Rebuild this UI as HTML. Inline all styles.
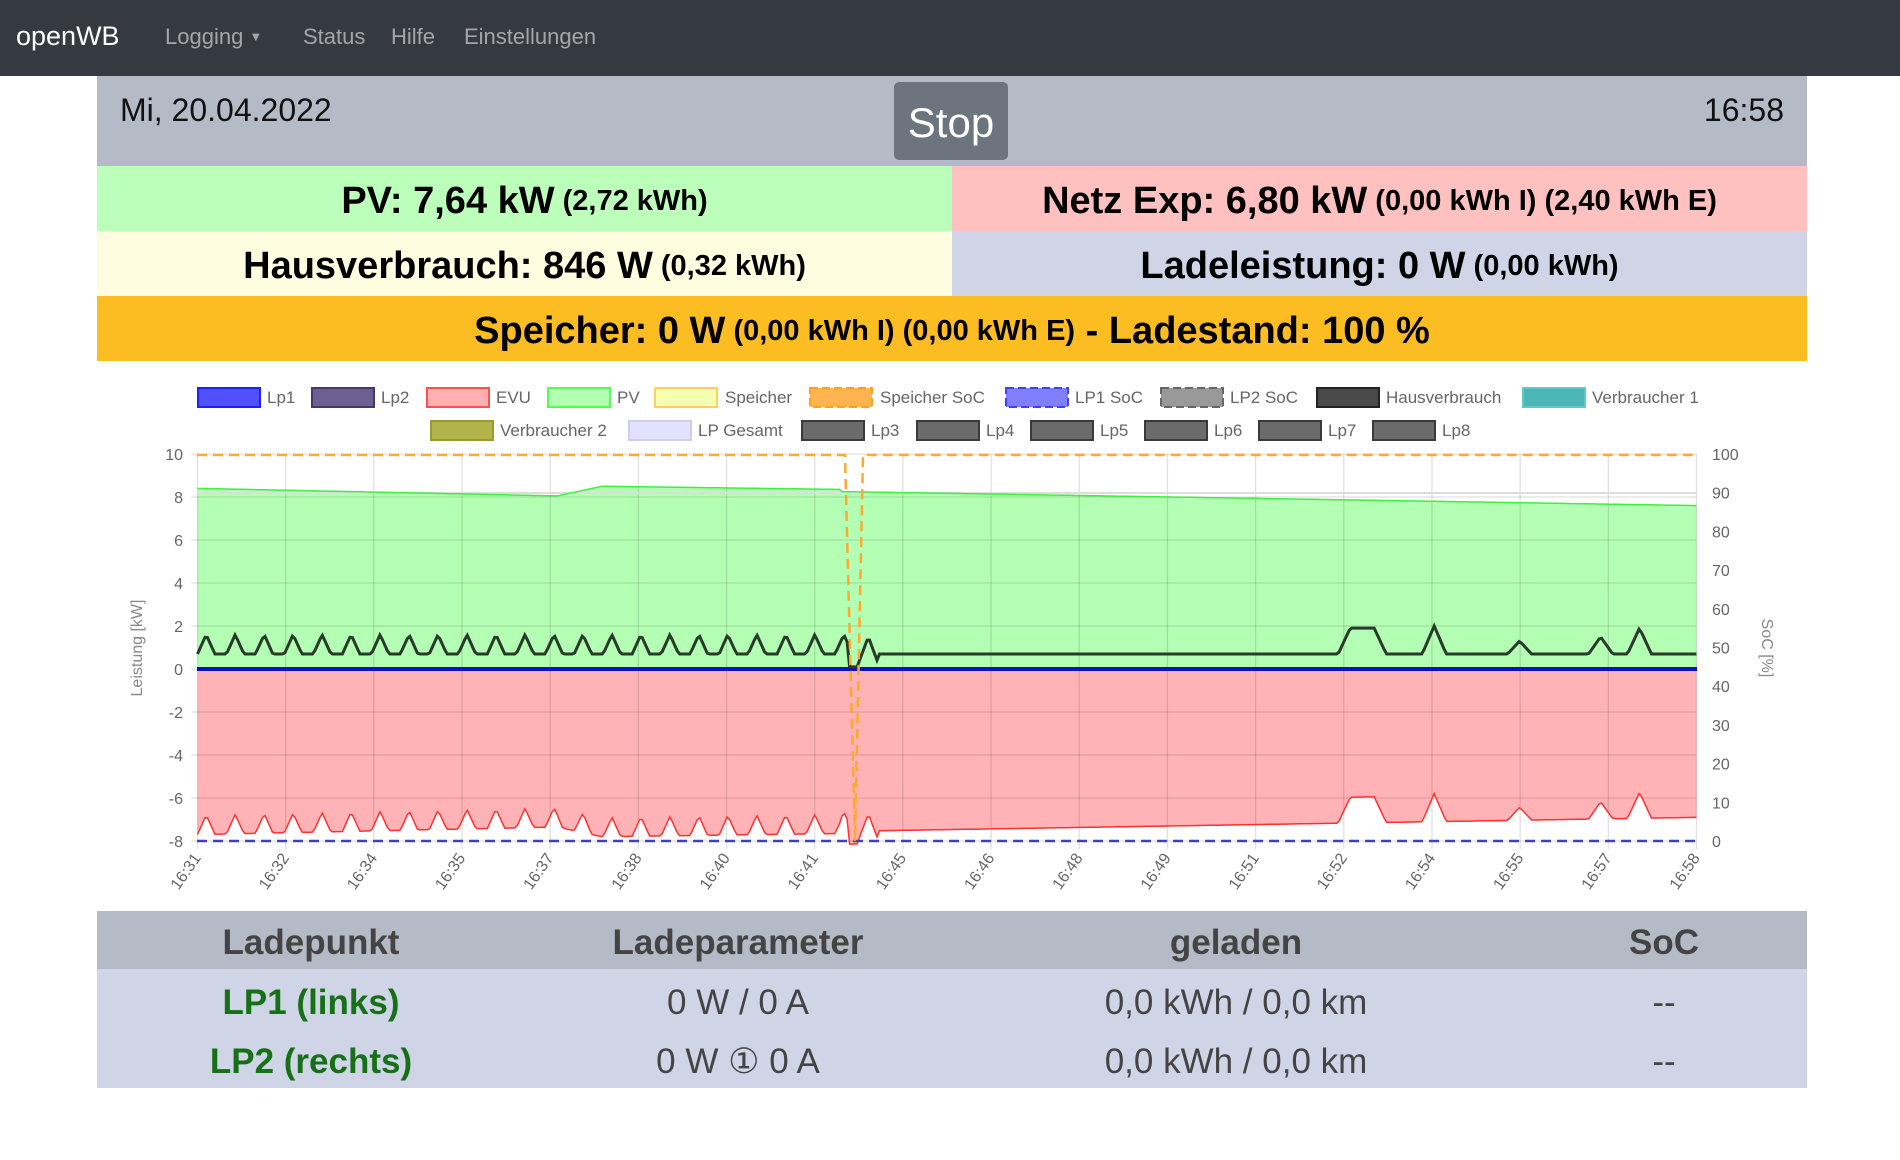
<!DOCTYPE html>
<html><head><meta charset="utf-8"><style>
*{margin:0;padding:0;box-sizing:border-box}
body{width:1900px;height:1160px;background:#fff;font-family:"Liberation Sans",sans-serif;position:relative;overflow:hidden}
.a{position:absolute}
.nav{left:0;top:0;width:1900px;height:76px;background:#343a40}
.nl{top:24px;font-size:22px;color:rgba(255,255,255,.55)}
.box{display:flex;align-items:center;justify-content:center;font-weight:bold;font-size:38px;color:#000;white-space:nowrap;padding-top:6px}
.box small{font-size:29px;margin-left:8px}
.th{top:914px;height:58px;font-size:35px;font-weight:bold;color:#444;text-align:center;width:500px;margin-left:-250px;line-height:58px}
.td{font-size:35px;color:#444;text-align:center;width:500px;margin-left:-250px}
.g{color:#177017;font-weight:bold}
</style></head><body>
<div class="a nav"></div>
<div class="a" style="left:16px;top:21px;font-size:27px;color:#fff">openWB</div>
<div class="a nl" style="left:165px">Logging <span style="font-size:13px;vertical-align:3px">&#9660;</span></div>
<div class="a nl" style="left:303px">Status</div>
<div class="a nl" style="left:391px">Hilfe</div>
<div class="a nl" style="left:464px">Einstellungen</div>

<div class="a" style="left:97px;top:76px;width:1710px;height:90px;background:#b5bac7"></div>
<div class="a" style="left:120px;top:92px;font-size:32px;color:#111">Mi, 20.04.2022</div>
<div class="a" style="right:116px;top:92px;font-size:32px;color:#111">16:58</div>
<div class="a" style="left:894px;top:82px;width:114px;height:78px;background:#6c757d;border-radius:5px;color:#fff;font-size:42px;text-align:center;line-height:82px">Stop</div>

<div class="a box" style="left:97px;top:166px;width:855px;height:65px;background:#bbffbb">PV: 7,64 kW<small>(2,72 kWh)</small></div>
<div class="a box" style="left:952px;top:166px;width:855px;height:65px;background:#ffc0c0">Netz Exp: 6,80 kW<small>(0,00 kWh I) (2,40 kWh E)</small></div>
<div class="a box" style="left:97px;top:231px;width:855px;height:65px;background:#fffde0">Hausverbrauch: 846 W<small>(0,32 kWh)</small></div>
<div class="a box" style="left:952px;top:231px;width:855px;height:65px;background:#cfd5e6">Ladeleistung: 0 W<small>(0,00 kWh)</small></div>
<div class="a box" style="left:97px;top:296px;width:1710px;height:65px;background:#fcbd23">Speicher: 0 W<small>(0,00 kWh I) (0,00 kWh E)</small>&nbsp;- Ladestand: 100 %</div>

<svg class="a" style="left:0;top:361px" width="1900" height="550" viewBox="0 361 1900 550" font-family="Liberation Sans, sans-serif">
<g font-size="17" fill="#666">
<rect x="198" y="388" width="62" height="19" fill="#5050ff" stroke="#2020ff" stroke-width="2"/><text x="267" y="403">Lp1</text>
<rect x="312" y="388" width="62" height="19" fill="#6e5f93" stroke="#433a6a" stroke-width="2"/><text x="381" y="403">Lp2</text>
<rect x="427" y="388" width="62" height="19" fill="#ffb0b0" stroke="#ff5050" stroke-width="2"/><text x="496" y="403">EVU</text>
<rect x="548" y="388" width="62" height="19" fill="#b3ffb3" stroke="#50ff50" stroke-width="2"/><text x="617" y="403">PV</text>
<rect x="655" y="388" width="62" height="19" fill="#f5ffb0" stroke="#ffd060" stroke-width="2"/><text x="725" y="403">Speicher</text>
<rect x="810" y="388" width="62" height="19" fill="#ffb450" stroke="#ffa020" stroke-width="2" stroke-dasharray="8 4"/><text x="880" y="403">Speicher SoC</text>
<rect x="1006" y="388" width="62" height="19" fill="#8080ff" stroke="#4040ff" stroke-width="2" stroke-dasharray="8 4"/><text x="1075" y="403">LP1 SoC</text>
<rect x="1161" y="388" width="62" height="19" fill="#999" stroke="#666" stroke-width="2" stroke-dasharray="8 4"/><text x="1230" y="403">LP2 SoC</text>
<rect x="1317" y="388" width="62" height="19" fill="#4a4a4a" stroke="#222" stroke-width="2"/><text x="1386" y="403">Hausverbrauch</text>
<rect x="1523" y="388" width="62" height="19" fill="#4cb5b5" stroke="#60c8c8" stroke-width="2"/><text x="1592" y="403">Verbraucher 1</text>
<rect x="431" y="421" width="62" height="19" fill="#b3b34c" stroke="#999930" stroke-width="2"/><text x="500" y="436">Verbraucher 2</text>
<rect x="629" y="421" width="62" height="19" fill="#e2e2ff" stroke="#d0d0ee" stroke-width="2"/><text x="698" y="436">LP Gesamt</text>
<rect x="802" y="421" width="62" height="19" fill="#6b6b6e" stroke="#3a3a3a" stroke-width="2"/><text x="871" y="436">Lp3</text>
<rect x="917" y="421" width="62" height="19" fill="#6b6b6e" stroke="#3a3a3a" stroke-width="2"/><text x="986" y="436">Lp4</text>
<rect x="1031" y="421" width="62" height="19" fill="#6b6b6e" stroke="#3a3a3a" stroke-width="2"/><text x="1100" y="436">Lp5</text>
<rect x="1145" y="421" width="62" height="19" fill="#6b6b6e" stroke="#3a3a3a" stroke-width="2"/><text x="1214" y="436">Lp6</text>
<rect x="1259" y="421" width="62" height="19" fill="#6b6b6e" stroke="#3a3a3a" stroke-width="2"/><text x="1328" y="436">Lp7</text>
<rect x="1373" y="421" width="62" height="19" fill="#6b6b6e" stroke="#3a3a3a" stroke-width="2"/><text x="1442" y="436">Lp8</text>
</g>
<path id="pvf" fill="#b3ffb3"/>
<path id="evf" fill="#ffb3b6"/>
<g id="grid" stroke="rgba(0,0,0,0.12)" stroke-width="1.3"></g>
<line x1="197" y1="493" x2="1697" y2="493" stroke="#ddd" stroke-width="2"/>
<path id="pvl" fill="none" stroke="#40ee40" stroke-width="1.5"/>
<path id="evl" fill="none" stroke="#ff3030" stroke-width="1.5"/>
<line x1="197" y1="669" x2="1697" y2="669" stroke="#1010c0" stroke-width="4"/>
<line x1="197" y1="841" x2="1697" y2="841" stroke="#4040c0" stroke-width="2.5" stroke-dasharray="10 6"/>
<path id="hl" fill="none" stroke="#2a3a2a" stroke-width="3"/>
<path d="M197 455 H845 L855 841 L863 455 H1697" fill="none" stroke="#ffa830" stroke-width="2.5" stroke-dasharray="10 6"/>
<g font-size="16" fill="#666" id="yl"></g>
<text transform="translate(142 648) rotate(-90)" font-size="16" fill="#888" text-anchor="middle">Leistung [kW]</text>
<text transform="translate(1762 648) rotate(90)" font-size="16" fill="#888" text-anchor="middle">SoC [%]</text>
<g font-size="16" fill="#666" id="xl"></g>
</svg>

<div class="a" style="left:97px;top:911px;width:1710px;height:58px;background:#b5bac7"></div>
<div class="a" style="left:97px;top:969px;width:1710px;height:119px;background:#cfd5e6"></div>
<div class="a th" style="left:311px">Ladepunkt</div>
<div class="a th" style="left:738px">Ladeparameter</div>
<div class="a th" style="left:1236px">geladen</div>
<div class="a th" style="left:1664px">SoC</div>
<div class="a td g" style="left:311px;top:983px">LP1 (links)</div>
<div class="a td" style="left:738px;top:983px">0 W / 0 A</div>
<div class="a td" style="left:1236px;top:983px">0,0 kWh / 0,0 km</div>
<div class="a td" style="left:1664px;top:983px">--</div>
<div class="a td g" style="left:311px;top:1042px">LP2 (rechts)</div>
<div class="a td" style="left:738px;top:1042px">0 W &#9312; 0 A</div>
<div class="a td" style="left:1236px;top:1042px">0,0 kWh / 0,0 km</div>
<div class="a td" style="left:1664px;top:1042px">--</div>
<script>
var X0=197.5,X1=1696.5,Y10=454,U=21.5;
function Y(v){return Y10+(10-v)*U}
var N=600,pv=[],h=[];
var spikes=[[0.769,0.785,1.9],[0.825,0.825,2.0],[0.882,0.882,1.3],[0.936,0.936,1.5],[0.962,0.962,1.9]];
for(var i=0;i<=N;i++){var f=i/N,p;
 if(f<0.24)p=8.4-0.35*f/0.24;else if(f<0.27)p=8.05+0.45*(f-0.24)/0.03;else if(f<0.43)p=8.5-0.15*(f-0.27)/0.16;else p=8.25-0.65*(f-0.43)/0.57;
 pv.push(p);
 var v;
 if(f<0.435){var per=0.435/22.5,ph=(f%per)/per;v=0.7+0.9*Math.max(0,1-Math.abs(ph-0.3)/0.3);}
 else if(f<0.44)v=0.1;
 else if(f<0.455){v=0.1+1.4*(1-Math.abs(f-0.4475)/0.0075);}
 else {v=0.7;for(var s of spikes){var w=0.008;if(f>=s[0]-w&&f<=s[1]+w){var d=f<s[0]?(f-(s[0]-w))/w:f>s[1]?((s[1]+w)-f)/w:1;v=Math.max(v,0.7+(s[2]-0.7)*d);}}}
 h.push(v);}
function xs(i){return (X0+(X1-X0)*i/N).toFixed(1)}
var a="",b="",c="";
for(i=0;i<=N;i++){a+=(i?"L":"M")+xs(i)+" "+Y(pv[i]).toFixed(1);b+=(i?"L":"M")+xs(i)+" "+Y(h[i]-pv[i]).toFixed(1);c+=(i?"L":"M")+xs(i)+" "+Y(h[i]).toFixed(1);}
var z=Y(0);
document.getElementById("pvl").setAttribute("d",a);
document.getElementById("pvf").setAttribute("d",a+"L"+X1+" "+z+"L"+X0+" "+z+"Z");
document.getElementById("evl").setAttribute("d",b);
document.getElementById("evf").setAttribute("d",b+"L"+X1+" "+z+"L"+X0+" "+z+"Z");
document.getElementById("hl").setAttribute("d",c);
var ns="http://www.w3.org/2000/svg",g=document.getElementById("grid"),yl=document.getElementById("yl"),xl=document.getElementById("xl");
function el(t,at,p,tx){var e=document.createElementNS(ns,t);for(var k in at)e.setAttribute(k,at[k]);if(tx!=null)e.textContent=tx;p.appendChild(e);}
for(var v=-8;v<=10;v+=2){var y=Y(v);el("line",{x1:X0-6,y1:y,x2:X1,y2:y},g);el("text",{x:183,y:y+6,"text-anchor":"end"},yl,v);}
for(var k=0;k<=10;k++){var y=841-k*38.7;el("text",{x:1712,y:y+6},yl,k*10);}
var lab=["16:31","16:32","16:34","16:35","16:37","16:38","16:40","16:41","16:45","16:46","16:48","16:49","16:51","16:52","16:54","16:55","16:57","16:58"];
for(k=0;k<18;k++){var x=X0+k*(X1-X0)/17;el("line",{x1:x,y1:454,x2:x,y2:849},g);el("text",{transform:"translate("+(x+4)+" 858) rotate(-55)","text-anchor":"end"},xl,lab[k]);}
</script>
</body></html>
